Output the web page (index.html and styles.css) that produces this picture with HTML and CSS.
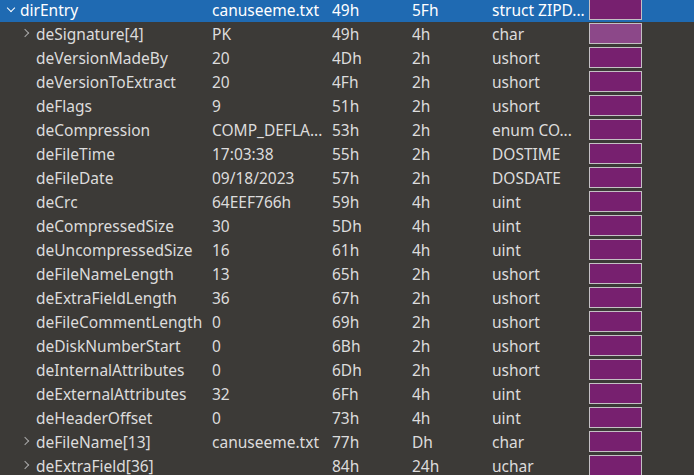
FILE: index.html
```html
<!DOCTYPE html>
<html>
<head>
<meta charset="utf-8">
<link rel="stylesheet" href="styles.css">
</head>
<body>
<div class="tree">
  <div class="row selected">
    <div class="name top"><span class="chev open"></span>dirEntry</div>
    <div class="val">canuseeme.txt</div><div class="start">49h</div><div class="size">5Fh</div><div class="type">struct ZIPD...</div><div class="sw"></div>
  </div>
  <div class="row">
    <div class="name"><span class="chev"></span>deSignature[4]</div>
    <div class="val">PK</div><div class="start">49h</div><div class="size">4h</div><div class="type">char</div><div class="sw light"></div>
  </div>
  <div class="row"><div class="name"><span class="chev none"></span>deVersionMadeBy</div><div class="val">20</div><div class="start">4Dh</div><div class="size">2h</div><div class="type">ushort</div><div class="sw"></div></div>
  <div class="row"><div class="name"><span class="chev none"></span>deVersionToExtract</div><div class="val">20</div><div class="start">4Fh</div><div class="size">2h</div><div class="type">ushort</div><div class="sw"></div></div>
  <div class="row"><div class="name"><span class="chev none"></span>deFlags</div><div class="val">9</div><div class="start">51h</div><div class="size">2h</div><div class="type">ushort</div><div class="sw"></div></div>
  <div class="row"><div class="name"><span class="chev none"></span>deCompression</div><div class="val">COMP_DEFLA...</div><div class="start">53h</div><div class="size">2h</div><div class="type">enum CO...</div><div class="sw"></div></div>
  <div class="row"><div class="name"><span class="chev none"></span>deFileTime</div><div class="val">17:03:38</div><div class="start">55h</div><div class="size">2h</div><div class="type">DOSTIME</div><div class="sw"></div></div>
  <div class="row"><div class="name"><span class="chev none"></span>deFileDate</div><div class="val">09/18/2023</div><div class="start">57h</div><div class="size">2h</div><div class="type">DOSDATE</div><div class="sw"></div></div>
  <div class="row"><div class="name"><span class="chev none"></span>deCrc</div><div class="val">64EEF766h</div><div class="start">59h</div><div class="size">4h</div><div class="type">uint</div><div class="sw"></div></div>
  <div class="row"><div class="name"><span class="chev none"></span>deCompressedSize</div><div class="val">30</div><div class="start">5Dh</div><div class="size">4h</div><div class="type">uint</div><div class="sw"></div></div>
  <div class="row"><div class="name"><span class="chev none"></span>deUncompressedSize</div><div class="val">16</div><div class="start">61h</div><div class="size">4h</div><div class="type">uint</div><div class="sw"></div></div>
  <div class="row"><div class="name"><span class="chev none"></span>deFileNameLength</div><div class="val">13</div><div class="start">65h</div><div class="size">2h</div><div class="type">ushort</div><div class="sw"></div></div>
  <div class="row"><div class="name"><span class="chev none"></span>deExtraFieldLength</div><div class="val">36</div><div class="start">67h</div><div class="size">2h</div><div class="type">ushort</div><div class="sw"></div></div>
  <div class="row"><div class="name"><span class="chev none"></span>deFileCommentLength</div><div class="val">0</div><div class="start">69h</div><div class="size">2h</div><div class="type">ushort</div><div class="sw"></div></div>
  <div class="row"><div class="name"><span class="chev none"></span>deDiskNumberStart</div><div class="val">0</div><div class="start">6Bh</div><div class="size">2h</div><div class="type">ushort</div><div class="sw"></div></div>
  <div class="row"><div class="name"><span class="chev none"></span>deInternalAttributes</div><div class="val">0</div><div class="start">6Dh</div><div class="size">2h</div><div class="type">ushort</div><div class="sw"></div></div>
  <div class="row"><div class="name"><span class="chev none"></span>deExternalAttributes</div><div class="val">32</div><div class="start">6Fh</div><div class="size">4h</div><div class="type">uint</div><div class="sw"></div></div>
  <div class="row"><div class="name"><span class="chev none"></span>deHeaderOffset</div><div class="val">0</div><div class="start">73h</div><div class="size">4h</div><div class="type">uint</div><div class="sw"></div></div>
  <div class="row"><div class="name"><span class="chev"></span>deFileName[13]</div><div class="val">canuseeme.txt</div><div class="start">77h</div><div class="size">Dh</div><div class="type">char</div><div class="sw"></div></div>
  <div class="row"><div class="name"><span class="chev"></span>deExtraField[36]</div><div class="val"></div><div class="start">84h</div><div class="size">24h</div><div class="type">uchar</div><div class="sw"></div></div>
</div>
</body>
</html>
```

FILE: styles.css
```css
html, body {
  margin: 0;
  padding: 0;
  background: #3c3a37;
  height: 100%;
  overflow: hidden;
}
.tree {
  margin-top: -2px;
  font-family: "Noto Sans", "Open Sans", sans-serif;
  font-size: 15.5px;
  color: #dcdcdc;
}
.row {
  display: grid;
  grid-template-columns: 212px 120px 80px 80px 97px 53px 1fr;
  height: 24px;
  line-height: 24px;
  white-space: nowrap;
}
.row > div {
  overflow: hidden;
}
.selected {
  background: #1f6ab2;
  color: #ffffff;
}
.name {
  display: flex;
  align-items: center;
  padding-left: 20px;
}
.name.top {
  padding-left: 4px;
}
.chev {
  width: 16px;
  height: 24px;
  flex: none;
  position: relative;
}
.chev::before {
  content: "";
  position: absolute;
  left: 2px;
  top: 8px;
  width: 5px;
  height: 5px;
  border-right: 1.3px solid #a8a8a8;
  border-bottom: 1.3px solid #a8a8a8;
  transform: rotate(-45deg);
}
.chev.open::before {
  left: 4px;
  top: 7px;
  border-color: #ffffff;
  transform: rotate(45deg);
}
.chev.none::before {
  display: none;
}
.sw {
  margin-top: 1px;
  height: 21px;
  box-sizing: border-box;
  border: 1px solid #c4c0c4;
  background: #77206f;
}
.sw.light {
  background: #8c4889;
}
```
